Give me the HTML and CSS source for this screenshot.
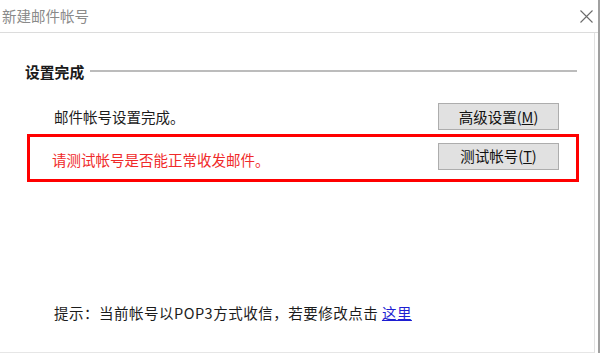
FILE: index.html
```html
<!DOCTYPE html>
<html lang="zh-CN">
<head>
<meta charset="utf-8">
<title>新建邮件帐号</title>
<link rel="stylesheet" href="styles.css">
</head>
<body>
<div class="window">
  <div class="titlebar">
    <span class="title">新建邮件帐号</span>
    <svg class="close" width="13" height="13" viewBox="0 0 13 13"><path d="M0.5 0.5 L12.5 12.5 M12.5 0.5 L0.5 12.5" stroke="#6b6b6b" stroke-width="1.1" fill="none"/></svg>
  </div>
  <div class="panel">
    <div class="heading">
      <span class="heading-text">设置完成</span>
      <span class="heading-line"></span>
    </div>
    <div class="row">
      <span class="msg">邮件帐号设置完成。</span>
      <button class="btn">高级设置(<u>M</u>)</button>
    </div>
    <div class="highlight">
      <span class="msg red">请测试帐号是否能正常收发邮件。</span>
      <button class="btn">测试帐号(<u>T</u>)</button>
    </div>
    <div class="hint">提示<span class="punct">：</span>当前帐号以POP3方式收信<span class="punct">，</span>若要修改点击 <a class="link" href="#">这里</a></div>
  </div>
</div>
</body>
</html>
```
FILE: styles.css
```css
html, body {
  margin: 0;
  padding: 0;
  background: #ffffff;
}
body {
  width: 600px;
  height: 353px;
  overflow: hidden;
  font-family: "Noto Sans CJK SC", "Noto Sans", sans-serif;
  font-size: 14.5px;
  color: #1c1c1c;
}
.window {
  width: 598px;
  height: 353px;
  border-right: 2px solid #a0a0a0;
  display: flex;
  flex-direction: column;
}
.titlebar {
  height: 32px;
  border-bottom: 1px solid #dcdcdc;
  display: flex;
  align-items: center;
  justify-content: space-between;
  padding: 0 5px 0 2px;
}
.title {
  color: #8a8a8a;
  font-size: 14.5px;
  line-height: 32px;
}
.close {
  display: block;
  margin-top: 1px;
}
.panel {
  width: 595px;
  flex: 1;
  box-sizing: border-box;
  border-right: 1px solid #e2e2e2;
  border-bottom: 1px solid #e6e6e6;
  padding: 29px 17px 29px 25px;
  display: flex;
  flex-direction: column;
}
.heading {
  display: flex;
  align-items: center;
  gap: 6px;
  height: 20px;
}
.heading-text {
  font-weight: bold;
  font-size: 14.8px;
  line-height: 20px;
  color: #1a1a1a;
}
.heading-line {
  flex: 1;
  height: 2px;
  background: #bcbcbc;
  margin-top: -3px;
}
.row {
  margin-top: 21px;
  display: flex;
  align-items: center;
  justify-content: space-between;
  padding: 0 18px 0 29px;
  height: 27px;
}
.msg {
  line-height: 20px;
}
.red {
  color: #f02a2a;
}
.btn {
  width: 121px;
  height: 27px;
  box-sizing: border-box;
  background: #e1e1e1;
  border: 1px solid #adadad;
  font-family: "Noto Sans CJK SC", "Noto Sans", sans-serif;
  font-size: 14.5px;
  color: #111;
  padding: 0;
  line-height: 24px;
}
.highlight {
  margin: 4px -2px 0 2px;
  border: 3px solid #ff0000;
  display: flex;
  align-items: center;
  justify-content: space-between;
  padding: 5px 17px 9px 22px;
}
.highlight .msg {
  margin-top: 8px;
}
.hint {
  margin-top: auto;
  padding-left: 29px;
  line-height: 20px;
  letter-spacing: 0.5px;
}
.punct {
  font-family: "Noto Sans CJK TC", "Noto Sans CJK SC", sans-serif;
}
.link {
  color: #1e1ed2;
  text-decoration: underline;
}
```
